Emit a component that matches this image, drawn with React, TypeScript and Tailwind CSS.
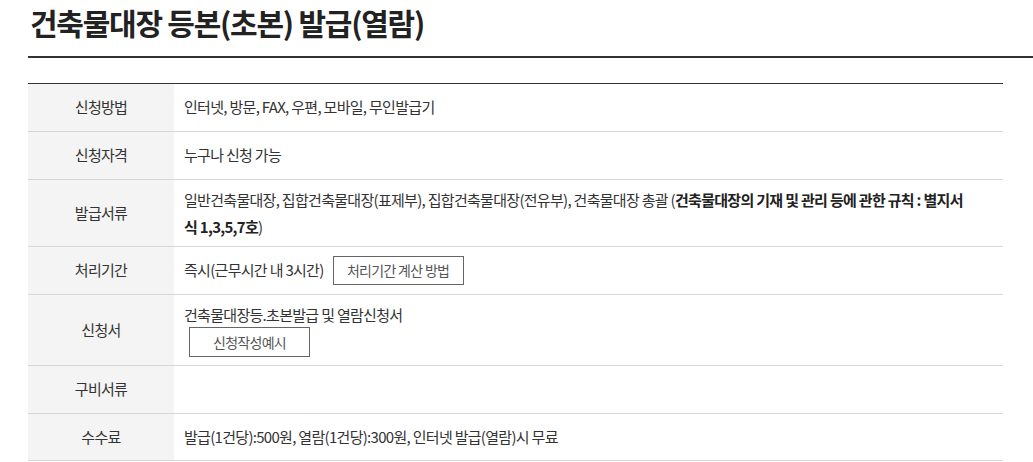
const rows: { label: string; content: React.ReactNode; cls: string }[] = [
  {
    label: '신청방법',
    cls: 'h-[48px]',
    content: <span>인터넷, 방문, FAX, 우편, 모바일, 무인발급기</span>,
  },
  {
    label: '신청자격',
    cls: 'h-[48px]',
    content: <span>누구나 신청 가능</span>,
  },
  {
    label: '발급서류',
    cls: 'h-[67px]',
    content: (
      <span className="leading-[27px]">
        일반건축물대장, 집합건축물대장(표제부), 집합건축물대장(전유부), 건축물대장 총괄 (
        <b className="font-bold text-[#222]">건축물대장의 기재 및 관리 등에 관한 규칙 : 별지서</b>
        <br />
        <b className="font-bold text-[#222]">식 1,3,5,7호</b>)
      </span>
    ),
  },
  {
    label: '처리기간',
    cls: 'h-[48px]',
    content: (
      <div className="flex items-center">
        <span>즉시(근무시간 내 3시간)</span>
        <button className="ml-[9px] h-[29px] w-[131px] border border-[#666] bg-white text-[14px] text-[#555]">
          처리기간 계산 방법
        </button>
      </div>
    ),
  },
  {
    label: '신청서',
    cls: 'h-[71px]',
    content: (
      <div className="flex flex-col items-start">
        <span className="leading-[24px]">건축물대장등.초본발급 및 열람신청서</span>
        <button className="ml-[5px] h-[30px] w-[121px] border border-[#666] bg-white text-[14px] text-[#555]">
          신청작성예시
        </button>
      </div>
    ),
  },
  {
    label: '구비서류',
    cls: 'h-[48px]',
    content: null,
  },
  {
    label: '수수료',
    cls: 'h-[47px]',
    content: <span>발급(1건당):500원, 열람(1건당):300원, 인터넷 발급(열람)시 무료</span>,
  },
];

export default function App() {
  return (
    <div
      className="min-h-[462px] bg-white pl-[28px] text-[#333]"
      style={{ fontFamily: '"Noto Sans CJK KR", "Noto Sans", sans-serif' }}
    >
      {/* Title */}
      <div className="flex h-[56px] items-start pl-[2px] pt-[2px]">
        <h1 className="text-[30px] font-bold leading-[40px] tracking-[-1.25px] text-[#222]">
          건축물대장 등본(초본) 발급(열람)
        </h1>
      </div>
      <div className="h-[2px] bg-[#333]" />

      {/* Table */}
      <div className="mr-[30px] mt-[25px] border-t border-[#333] text-[15px] tracking-[-0.7px]">
        {rows.map((r) => (
          <div key={r.label} className={`flex border-b border-[#d6d6d6] ${r.cls}`}>
            <div className="flex w-[146px] shrink-0 items-center justify-center bg-[#f4f4f4]">
              {r.label}
            </div>
            <div className="flex flex-1 items-center px-[10px]">{r.content}</div>
          </div>
        ))}
      </div>
    </div>
  );
}
